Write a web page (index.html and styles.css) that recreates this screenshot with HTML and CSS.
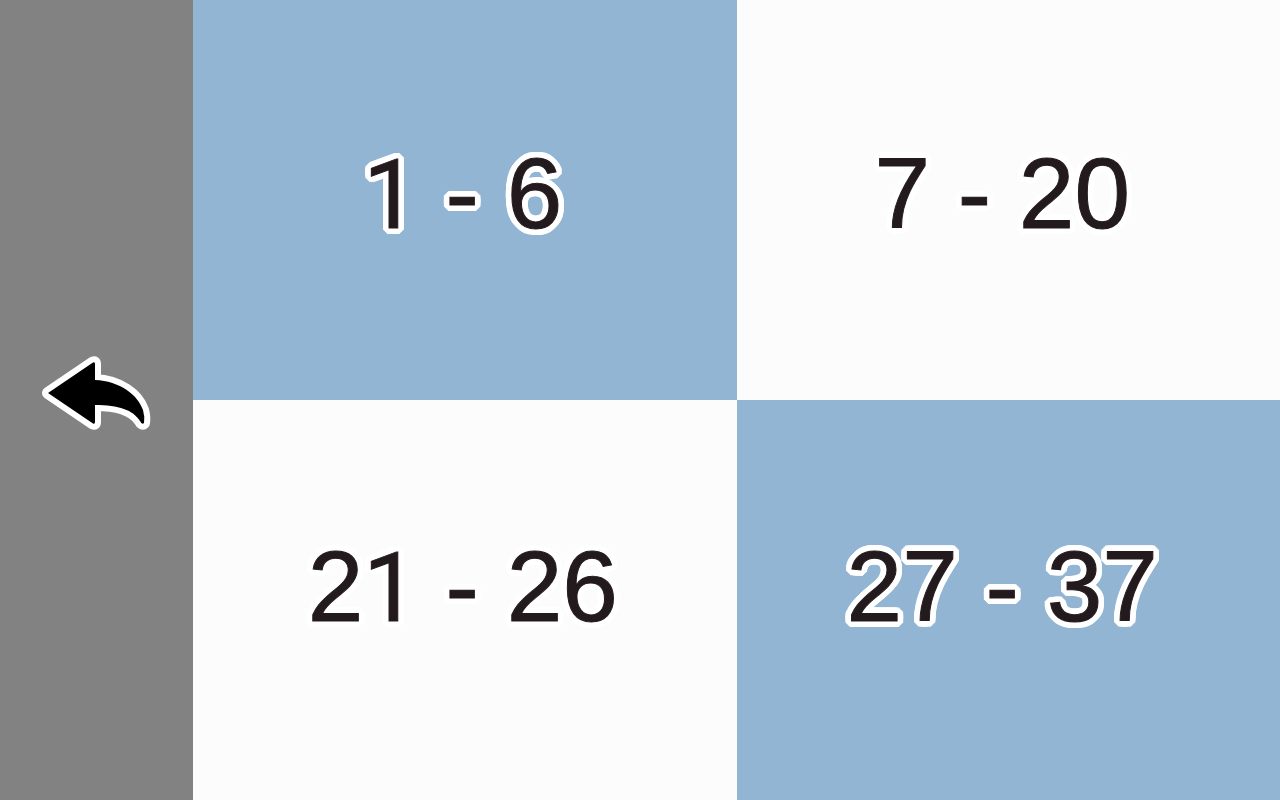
FILE: index.html
```html
<!DOCTYPE html>
<html lang="en">
<head>
<meta charset="utf-8">
<title>Select a range</title>
<link rel="stylesheet" href="styles.css">
</head>
<body>
<div class="screen">
  <button class="back" type="button" aria-label="Back">
    <svg class="back-icon" viewBox="0 0 110 76" aria-hidden="true">
      <path d="M7 38 L52 7.5 Q54 6.5 54 9 V25 C79 26 97 40 102 55 Q104 62 103 68 Q101 70 99 66 C92 55 78 50 54 50 V67 Q54 69.500 52 68.500 Z"/>
    </svg>
  </button>
  <main class="ranges">
    <button class="range blue" type="button"><span class="one">1</span> - 6</button>
    <button class="range" type="button">7 - 20</button>
    <button class="range" type="button">2<span class="one">1</span> - 26</button>
    <button class="range blue" type="button">27 - 37</button>
  </main>
</div>
</body>
</html>
```
FILE: styles.css
```css
* { box-sizing: border-box; }
body { margin: 0; }
.screen {
  display: grid;
  grid-template-columns: 193px 1fr;
  min-height: 100vh;
  background: #828282;
}
.back {
  display: flex;
  align-items: center;
  justify-content: center;
  border: 0;
  padding: 0 2px 14px 0;
  background: #828282;
  cursor: pointer;
}
.back-icon { width: 110px; height: 76px; overflow: visible; }
.back-icon path {
  fill: #000;
  stroke: #fff;
  stroke-width: 12px;
  stroke-linejoin: round;
  paint-order: stroke;
}
.ranges {
  display: grid;
  grid-template-columns: 1fr 1fr;
  grid-template-rows: 1fr 1fr;
}
.range {
  border: 0;
  padding: 0 4px 14px 0;
  background: #fcfcfc;
  color: #231a1e;
  font: 100px/1 "Liberation Sans", Arial, sans-serif;
  -webkit-text-stroke: 1px #231a1e;
  /* Ring of shadows: a rounded white outline */
  text-shadow:
    6px 0 #fff, 6px 2px #fff, 5px 3px #fff, 4px 4px #fff, 3px 5px #fff, 2px 6px #fff,
    0 6px #fff, -2px 6px #fff, -3px 5px #fff, -4px 4px #fff, -5px 3px #fff, -6px 2px #fff,
    -6px 0 #fff, -6px -2px #fff, -5px -3px #fff, -4px -4px #fff, -3px -5px #fff, -2px -6px #fff,
    0 -6px #fff, 2px -6px #fff, 3px -5px #fff, 4px -4px #fff, 5px -3px #fff, 6px -2px #fff,
    3px 0 #fff, -3px 0 #fff, 0 3px #fff, 0 -3px #fff;
  cursor: pointer;
}
.range:nth-child(even) { padding-right: 12px; }
.range:nth-child(n+3) { padding-bottom: 28px; }
.one { font-family: Roboto, "Liberation Sans", sans-serif; font-size: 97px; }
.blue { background: #93b5d4; }
```
